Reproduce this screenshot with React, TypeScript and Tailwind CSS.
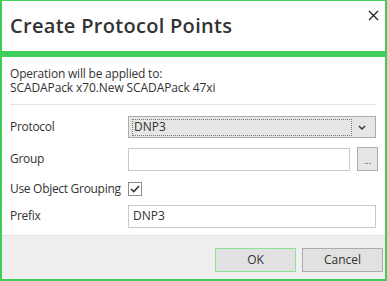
import React from "react";

export default function App() {
  const font = { fontFamily: '"Open Sans", "Noto Sans", Arial, sans-serif' };
  return (
    <div
      className="w-[387px] h-[281px] bg-white border-t border-x-2 border-b-2 border-[#3dcd58] flex flex-col text-[#333333] text-[12px] overflow-hidden"
      style={font}
    >
      {/* header */}
      <div className="relative h-[50px] shrink-0">
        <div className="pl-[8px] pt-[11px] text-[20px] font-semibold leading-[27px] text-[#333333] whitespace-nowrap tracking-[0.3px]">
          Create Protocol Points
        </div>
        <svg
          className="absolute right-[6px] top-[9px]"
          width="11"
          height="11"
          viewBox="0 0 11 11"
        >
          <path d="M1 1 L10 10 M10 1 L1 10" stroke="#222" strokeWidth="1.3" />
        </svg>
      </div>
      <div className="h-[6px] bg-[#3dcd58] shrink-0" />

      {/* body */}
      <div className="pl-[8px] pr-[9px] pt-[10px] h-[178px] shrink-0">
        <div className="leading-[14px] whitespace-nowrap tracking-[-0.2px]">Operation will be applied to:</div>
        <div className="leading-[14px] whitespace-nowrap tracking-[-0.1px]">SCADAPack x70.New SCADAPack 47xi</div>
        <div className="mt-[9px] h-px bg-[#e3e3e3]" />

        {/* Protocol */}
        <div className="mt-[10px] h-[24px] flex items-center">
          <div className="w-[118px] whitespace-nowrap tracking-[-0.3px]">Protocol</div>
          <div className="flex-1 h-[22px] bg-[#e6e6e6] border border-[#acacac] flex items-center px-[3px]">
            <div className="flex-1 h-[17px] border border-dotted border-[#7a7a7a] flex items-center pl-[1px] leading-none">
              DNP3
            </div>
            <div className="w-[20px] flex justify-center">
              <svg width="8" height="5" viewBox="0 0 8 5">
                <path d="M1 1 L4 4 L7 1" stroke="#333" strokeWidth="1.4" fill="none" />
              </svg>
            </div>
          </div>
        </div>

        {/* Group */}
        <div className="mt-[8px] h-[24px] flex items-center">
          <div className="w-[118px] whitespace-nowrap tracking-[-0.3px]">Group</div>
          <div className="flex-1 h-[23px] bg-white border border-[#c8c8c8]" />
          <div className="ml-[7px] w-[21px] h-[24px] bg-[#e6e6e6] border border-[#adadad] flex items-end justify-center pb-[5px] text-[9px] leading-none -mr-[2px]">
            ...
          </div>
        </div>

        {/* Use Object Grouping */}
        <div className="mt-[8px] h-[20px] flex items-center">
          <div className="w-[118px] whitespace-nowrap tracking-[-0.3px]">Use Object Grouping</div>
          <div className="w-[14px] h-[14px] border border-[#8f8f8f] bg-white flex items-center justify-center">
            <svg width="10" height="8" viewBox="0 0 10 8">
              <path d="M1 4 L3.8 6.6 L9 1" stroke="#333" strokeWidth="1.6" fill="none" />
            </svg>
          </div>
        </div>

        {/* Prefix */}
        <div className="mt-[5px] h-[24px] flex items-center">
          <div className="w-[118px] whitespace-nowrap tracking-[-0.3px]">Prefix</div>
          <div className="flex-1 h-[23px] bg-white border border-[#c8c8c8] flex items-center pl-[4px]">
            DNP3
          </div>
        </div>
      </div>

      {/* footer */}
      <div className="flex-1 bg-[#efefef] border-t border-[#e3e3e3] flex justify-end items-start pt-[12px] pr-[2px] gap-[6px]">
        <div className="w-[81px] h-[24px] bg-[#e1e1e1] border border-[#86e596] flex items-center justify-center">
          OK
        </div>
        <div className="w-[81px] h-[24px] bg-[#e1e1e1] border border-[#adadad] flex items-center justify-center">
          Cancel
        </div>
      </div>
    </div>
  );
}
